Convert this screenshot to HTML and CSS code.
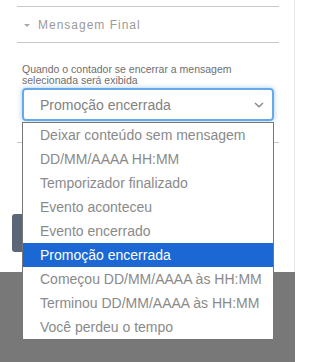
FILE: index.html
```html
<!DOCTYPE html>
<html lang="pt">
<head>
<meta charset="utf-8">
<title>Mensagem Final</title>
<link rel="stylesheet" href="styles.css">
</head>
<body>
<div class="page">
  <div class="panel">
    <div class="rule rule-top"></div>
    <div class="section-head">
      <span class="caret"></span>
      <span class="section-title">Mensagem Final</span>
    </div>
    <div class="rule"></div>
    <div class="field">
      <label class="field-label">Quando o contador se encerrar a mensagem selecionada será exibida</label>
      <div class="select">
        <span class="select-value">Promoção encerrada</span>
        <svg class="chevron" width="10" height="6" viewBox="0 0 10 6"><polyline points="1,1 5,4.8 9,1" fill="none" stroke="#8a8a8a" stroke-width="1.5"/></svg>
      </div>
    </div>
    <div class="rule rule-after"></div>
    <div class="btn-dark"></div>
  </div>
  <div class="backdrop"></div>
  <ul class="dropdown">
    <li class="opt">Deixar conteúdo sem mensagem</li>
    <li class="opt">DD/MM/AAAA HH:MM</li>
    <li class="opt">Temporizador finalizado</li>
    <li class="opt">Evento aconteceu</li>
    <li class="opt">Evento encerrado</li>
    <li class="opt opt-selected">Promoção encerrada</li>
    <li class="opt">Começou DD/MM/AAAA às HH:MM</li>
    <li class="opt">Terminou DD/MM/AAAA às HH:MM</li>
    <li class="opt">Você perdeu o tempo</li>
  </ul>
</div>
</body>
</html>
```

FILE: styles.css
```css
html, body {
  margin: 0;
  padding: 0;
  background: #ffffff;
}
body {
  width: 295px;
  height: 362px;
  overflow: hidden;
  font-family: "Liberation Sans", Arial, sans-serif;
}
.page {
  position: relative;
  width: 295px;
  height: 362px;
}
.panel {
  width: 294px;
  height: 272px;
  border-right: 1px solid #e6e6e6;
  display: flex;
  flex-direction: column;
  overflow: hidden;
}
.rule {
  height: 1px;
  background: #c8c8c8;
  margin-left: 17px;
  width: 262px;
  flex: none;
}
.rule-top {
  margin-top: 6px;
}
.section-head {
  height: 35px;
  display: flex;
  align-items: center;
  padding-left: 24px;
  flex: none;
}
.caret {
  width: 0;
  height: 0;
  border-left: 3px solid transparent;
  border-right: 3px solid transparent;
  border-top: 3px solid #a8a8a8;
  margin-right: 8px;
  margin-top: 1px;
}
.section-title {
  font-size: 12px;
  letter-spacing: 1px;
  color: #9a9a9a;
}
.field {
  margin-left: 22px;
  width: 252px;
  margin-top: 21px;
  display: flex;
  flex-direction: column;
}
.field-label {
  font-size: 10.5px;
  line-height: 11px;
  color: #6e6e6e;
  height: 22px;
}
.select {
  margin-top: 2px;
  height: 33px;
  box-sizing: border-box;
  border: 2px solid #66aaea;
  border-radius: 4px;
  box-shadow: 0 0 5px rgba(102, 170, 233, 0.6);
  display: flex;
  align-items: center;
  padding-left: 16px;
  padding-right: 5px;
}
.select-value {
  flex: 1;
  font-size: 14px;
  color: #828282;
}
.chevron {
  display: block;
  margin-right: 3px;
  margin-top: 1px;
}
.rule-after {
  margin-top: 21px;
}
.btn-dark {
  margin-top: 71px;
  margin-left: 12px;
  width: 140px;
  height: 38px;
  border-radius: 3px;
  background: #5b6676;
  flex: none;
}
.backdrop {
  height: 90px;
  background: #787878;
}
.dropdown {
  position: absolute;
  top: 122px;
  left: 22px;
  width: 252px;
  box-sizing: border-box;
  margin: 0;
  padding: 0;
  list-style: none;
  border: 1px solid #767676;
  background: #ffffff;
}
.opt {
  height: 24px;
  line-height: 24px;
  padding-left: 17px;
  font-size: 14px;
  color: #8a8a8a;
  white-space: nowrap;
}
.opt-selected {
  background: #1b67d3;
  color: #ffffff;
}
```
